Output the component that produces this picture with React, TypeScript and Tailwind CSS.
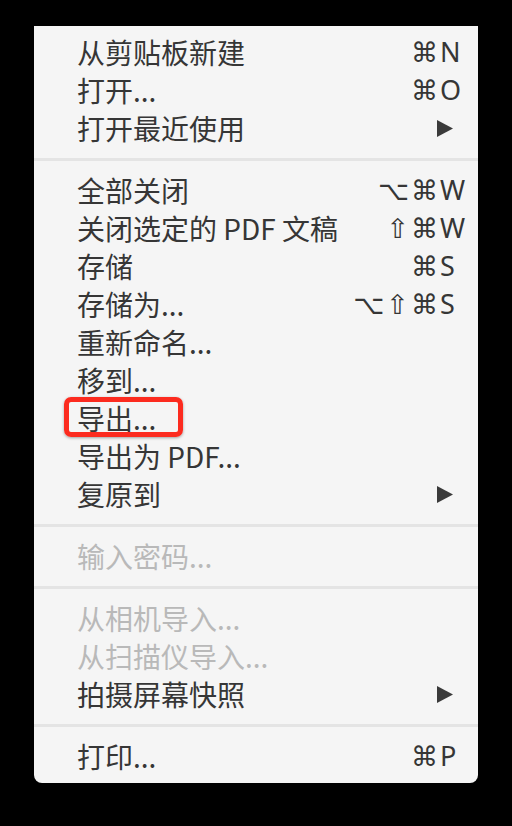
import React from 'react';

type Item = {
  label: string;
  mods?: string;
  keyChar?: string;
  submenu?: boolean;
  disabled?: boolean;
  marked?: boolean;
};

const groups: Item[][] = [
  [
    { label: '从剪贴板新建', mods: '⌘', keyChar: 'N' },
    { label: '打开...', mods: '⌘', keyChar: 'O' },
    { label: '打开最近使用', submenu: true },
  ],
  [
    { label: '全部关闭', mods: '⌥⌘', keyChar: 'W' },
    { label: '关闭选定的 PDF 文稿', mods: '⇧⌘', keyChar: 'W' },
    { label: '存储', mods: '⌘', keyChar: 'S' },
    { label: '存储为...', mods: '⌥⇧⌘', keyChar: 'S' },
    { label: '重新命名...' },
    { label: '移到...' },
    { label: '导出...', marked: true },
    { label: '导出为 PDF...' },
    { label: '复原到', submenu: true },
  ],
  [{ label: '输入密码...', disabled: true }],
  [
    { label: '从相机导入...', disabled: true },
    { label: '从扫描仪导入...', disabled: true },
    { label: '拍摄屏幕快照', submenu: true },
  ],
  [{ label: '打印...', mods: '⌘', keyChar: 'P' }],
];

function MenuRow({ item }: { item: Item }) {
  return (
    <div className="relative h-[38px] flex items-center justify-between pl-[43px]">
      <span className={item.disabled ? 'text-[#b9b9b9]' : 'text-[#363636]'}>{item.label}</span>
      {item.mods && (
        <span
          className="flex items-center pr-[8px] text-[#363636] text-[27px]"
          style={{ fontFamily: '"Noto Sans", "DejaVu Sans", sans-serif' }}
        >
          <span className="text-right tracking-[2px]">{item.mods}</span>
          <span className="w-[30px]">{item.keyChar}</span>
        </span>
      )}
      {item.submenu && (
        <svg className="mr-[25px]" width="16" height="17" viewBox="0 0 16 17">
          <path d="M0 0 L16 8.5 L0 17 Z" fill="#3a3a3a" />
        </svg>
      )}
      {item.marked && (
        <div className="absolute left-[30px] top-[-2px] w-[119px] h-[40px] rounded-[7px] border-[5px] border-[#fc2b1f] shadow-[0_1px_3px_rgba(0,0,0,0.35)]" />
      )}
    </div>
  );
}

export default function App() {
  return (
    <div className="min-h-[826px] w-[512px] bg-black pt-[26px]">
      <div
        className="ml-[34px] w-[444px] bg-[#f5f5f5] rounded-b-[8px] pt-[7px] pb-[8px] text-[28px] leading-[38px]"
        style={{ fontFamily: '"Noto Sans CJK SC", "Noto Sans", sans-serif' }}
      >
        {groups.map((g, gi) => (
          <div key={gi}>
            {gi > 0 && <div className="mt-[11px] mb-[10px] h-[3px] bg-[#e4e4e4]" />}
            {g.map((item, i) => (
              <MenuRow key={i} item={item} />
            ))}
          </div>
        ))}
      </div>
    </div>
  );
}
